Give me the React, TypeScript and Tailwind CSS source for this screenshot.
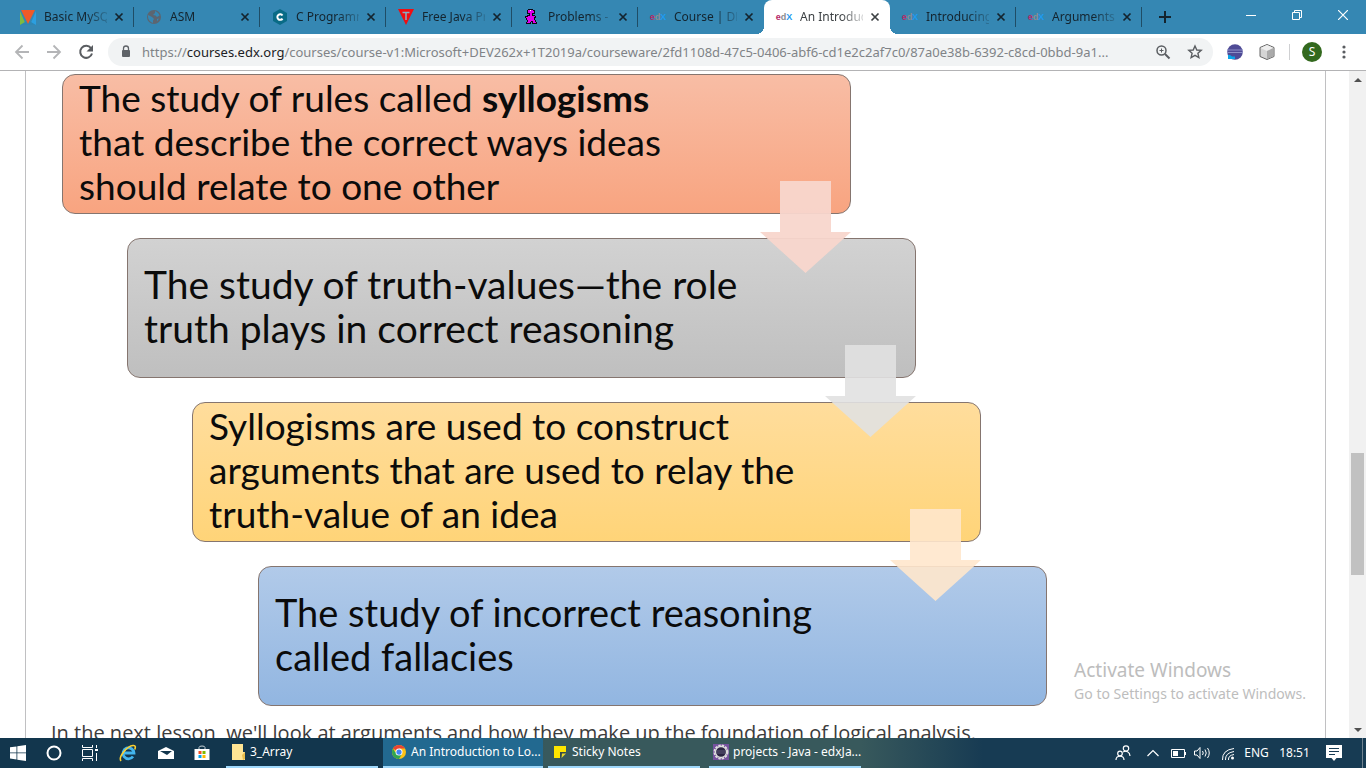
import React from "react";

type IconProps = { className?: string };

function EdxIcon() {
  return (
    <span aria-hidden="true" className="flex h-4 w-4 shrink-0 items-center justify-center font-['Liberation_Sans',sans-serif] text-[9px] leading-none font-bold">
      <span className="text-[#b52a67]">e</span>
      <span className="text-[#8a8c8f]">d</span>
      <span className="text-[#1d9bf0]">X</span>
    </span>
  );
}

function CourseIcon() {
  return (
    <svg viewBox="0 0 16 16" className="h-4 w-4 shrink-0">
      <path d="M0 2v14h6z" fill="#7dbb42" />
      <path d="M16 2v14h-6z" fill="#2c9fe0" />
      <path d="M0 16l5-3 3 1 3-1 5 3z" fill="#2e86b4" />
      <path d="M1 1h14L8 15z" fill="#f05a28" />
    </svg>
  );
}

function GlobeIcon() {
  return (
    <svg viewBox="0 0 16 16" className="h-4 w-4 shrink-0">
      <circle cx="8" cy="8" r="7" fill="#5c6570" />
      <path d="M9 2c2 1 4 2 4.500 4.500L11 8 9.500 6.500 7 6l2-2zM2 6l4 2 2 2-1 1.500V14C4 13 2 10.500 2 8zM11 10l2-.5-2 3z" fill="#3587b3" />
    </svg>
  );
}

function CIcon() {
  return (
    <svg viewBox="0 0 16 16" className="h-4 w-4 shrink-0">
      <path d="M8 0l7 4v8l-7 4-7-4V4z" fill="#096b86" />
      <path d="M10.500 6.500A2.800 2.800 0 1 0 10.500 9.600" fill="none" stroke="#fff" strokeWidth="2" />
    </svg>
  );
}

function TriangleIcon() {
  return (
    <svg viewBox="0 0 16 16" className="h-4 w-4 shrink-0">
      <path d="M0 0h16L8 16z" fill="#f10d10" />
      <path d="M4.500 3.500h7M8 3.500V11" stroke="#87aec4" strokeWidth="1.500" />
    </svg>
  );
}

function DinoIcon() {
  return (
    <svg viewBox="0 0 16 16" className="h-4 w-4 shrink-0" shapeRendering="crispEdges">
      <path d="M4 0h5v1h2v4H9v1h2v1h1v2h-1v2h1v2h1v2H8v-2H7v2H2v-2h1v-2H2V9H1V7h2V6h2V5H3V1h1z" fill="#0c0513" />
      <path d="M4 1h5v1h1v2H8v3h3v1h-1v3h1v2h1v1H9v-2H7v1H6v1H3v-1h1v-2H3V9H2V8h2V7h2V4H4z" fill="#e000ee" />
      <path d="M6 1h1v1H6z" fill="#fff" />
    </svg>
  );
}

function Close({ className = "" }: IconProps) {
  return (
    <svg viewBox="0 0 10 10" className={`h-[10px] w-[10px] ${className}`}>
      <path d="M1.500 1.500l7 7m0-7l-7 7" stroke="currentColor" strokeWidth="1.700" fill="none" />
    </svg>
  );
}

const tabs = [
  { title: "Basic MySQ", icon: <CourseIcon />, line: true },
  { title: "ASM", icon: <GlobeIcon />, line: true },
  { title: "C Programm", icon: <CIcon />, line: true },
  { title: "Free Java Pr", icon: <TriangleIcon />, line: true },
  { title: "Problems -", icon: <DinoIcon />, line: true },
  { title: "Course | DE", icon: <EdxIcon />, line: false },
  { title: "An Introduc", icon: <EdxIcon />, active: true, line: false },
  { title: "Introducing", icon: <EdxIcon />, line: true },
  { title: "Arguments", icon: <EdxIcon />, line: true },
];

function TabStrip() {
  return (
    <header className="flex h-[34px] shrink-0 bg-[#3587b3] pl-2">
      <div className="flex min-w-0">
        {tabs.map((tab) => (
          <div
            key={tab.title}
            className={
              tab.active
                ? "relative flex w-[126px] items-center rounded-t-lg bg-white pr-[7px] pl-3 text-[#3c4043]"
                : "relative flex w-[126px] items-center pr-[7px] pl-3 text-[#14242e]"
            }
          >
            {tab.active && (
              <>
                <span className="absolute bottom-0 -left-2 h-2 w-2 bg-[radial-gradient(circle_at_0_0,#3587b3_8px,#fff_8px)]" />
                <span className="absolute -right-2 bottom-0 h-2 w-2 bg-[radial-gradient(circle_at_100%_0,#3587b3_8px,#fff_8px)]" />
              </>
            )}
            <button className="flex min-w-0 flex-1 items-center gap-2">
              {tab.icon}
              <span className="flex-1 overflow-hidden text-left text-[12px] leading-4 whitespace-nowrap [mask-image:linear-gradient(to_right,#000_65%,#0003)]">
                {tab.title}
              </span>
            </button>
            <button aria-label={`Close ${tab.title}`} className="ml-1 flex h-4 w-4 items-center justify-center">
              <Close />
            </button>
            {tab.line && <span className="absolute top-[7px] right-0 h-5 w-px bg-[#1f4d66]" />}
          </div>
        ))}
      </div>
      <button aria-label="New tab" className="ml-[15px] flex w-4 items-center justify-center text-[#14242e]">
        <svg viewBox="0 0 12 12" className="h-3 w-3">
          <path d="M6 0v12M0 6h12" stroke="currentColor" strokeWidth="2" />
        </svg>
      </button>
      <div className="ml-auto flex h-[29px] text-white">
        <button aria-label="Minimize" className="flex w-[46px] items-center justify-center">
          <svg viewBox="0 0 10 10" className="h-[10px] w-[10px]"><path d="M0 5.500h10" stroke="currentColor" /></svg>
        </button>
        <button aria-label="Restore" className="flex w-[46px] items-center justify-center">
          <svg viewBox="0 0 10 10" className="h-[10px] w-[10px]" fill="none" stroke="currentColor"><path d="M.5 2.500h7v7h-7zM2.500 2.500v-2h7v7h-2" /></svg>
        </button>
        <button aria-label="Close window" className="flex w-[46px] items-center justify-center">
          <svg viewBox="0 0 10 10" className="h-[10px] w-[10px]"><path d="M0 0l10 10M10 0L0 10" stroke="currentColor" strokeWidth="1.200" /></svg>
        </button>
      </div>
    </header>
  );
}

function Toolbar() {
  return (
    <div className="flex h-[37px] shrink-0 items-center border-b border-[#b3b3b5] bg-white pr-[14px] pl-[14px]">
      <div className="flex w-[94px] shrink-0 gap-4">
        <button aria-label="Back" className="h-4 w-4 text-[#b4b5b7]">
          <svg viewBox="0 0 16 16" fill="none" stroke="currentColor" strokeWidth="1.800"><path d="M15 8H2M8.500 1.500L2 8l6.500 6.500" /></svg>
        </button>
        <button aria-label="Forward" className="h-4 w-4 text-[#b4b5b7]">
          <svg viewBox="0 0 16 16" fill="none" stroke="currentColor" strokeWidth="1.800"><path d="M1 8h13M7.500 1.500L14 8l-6.500 6.500" /></svg>
        </button>
        <button aria-label="Reload" className="h-4 w-4 text-[#5a5d61]">
          <svg viewBox="0 0 16 16" fill="none"><path d="M13 4.200A6 6 0 1 0 14 9.500" stroke="currentColor" strokeWidth="2" /><path d="M15 1v6.500H8.500z" fill="currentColor" /></svg>
        </button>
      </div>
      <div className="flex h-7 min-w-0 flex-1 items-center rounded-full bg-[#f1f3f4] pr-[10px] pl-3">
        <svg viewBox="0 0 12 14" className="mr-[10px] h-[14px] w-3 shrink-0 text-[#5f6368]">
          <path d="M3.500 6V3.500a2.500 2.500 0 0 1 5 0V6" fill="none" stroke="currentColor" strokeWidth="1.300" />
          <rect x="2" y="5" width="8" height="7" rx="1" fill="currentColor" />
        </svg>
        <div className="min-w-0 flex-1 truncate text-[13px] leading-5 text-[#808387]">
          https://<span className="text-[#202124]">courses.edx.org</span>/courses/course-v1:Microsoft+DEV262x+1T2019a/courseware/2fd1108d-47c5-0406-abf6-cd1e2c2af7c0/87a0e38b-6392-c8cd-0bbd-9a1...
        </div>
        <button aria-label="Zoom" className="ml-3 h-4 w-4 shrink-0 text-[#5a5d61]">
          <svg viewBox="0 0 16 16" fill="none" stroke="currentColor"><circle cx="6.500" cy="6.500" r="4.500" strokeWidth="1.500" /><path d="M10 10l4.500 4.500" strokeWidth="2" /><path d="M4.500 6.500h4M6.500 4.500v4" /></svg>
        </button>
        <button aria-label="Bookmark" className="ml-4 h-4 w-4 shrink-0 text-[#5a5d61]">
          <svg viewBox="0 0 16 16" fill="none" stroke="currentColor" strokeWidth="1.400"><path d="M8 2l1.800 4 4.400.4-3.300 2.900 1 4.300L8 11.300l-3.900 2.300 1-4.300-3.300-2.900 4.400-.4z" /></svg>
        </button>
      </div>
      <button aria-label="Eclipse extension" className="ml-[14px] h-4 w-4 shrink-0">
        <svg viewBox="0 0 16 16"><circle cx="8" cy="8" r="7.800" fill="#4f4b96" /><path d="M0 6h16M0 8.500h16" stroke="#8d8fc6" /><path d="M1 14v-3h2l2 1.500h3V15H1z" fill="#0ba4e8" /></svg>
      </button>
      <button aria-label="Cube extension" className="ml-4 h-4 w-4 shrink-0">
        <svg viewBox="0 0 16 16" stroke="#646464" strokeWidth="1"><path d="M8 .5l7 3v9l-7 3-7-3v-9z" fill="#d5d5d5" /><path d="M8 1l6.500 3L8 7 1.500 4z" fill="#eee" stroke="none" /><path d="M8 7l6.500-3v8.500L8 15z" fill="#aaa" stroke="none" /></svg>
      </button>
      <span className="ml-[14px] h-4 w-px bg-[#cfd0d2]" />
      <button aria-label="Profile" className="ml-3 flex h-5 w-5 shrink-0 items-center justify-center rounded-full bg-[#33691e] text-[12px] text-white">S</button>
      <button aria-label="Menu" className="ml-[14px] h-4 w-4 shrink-0 text-[#5a5d61]">
        <svg viewBox="0 0 16 16" fill="currentColor"><circle cx="8" cy="3" r="1.600" /><circle cx="8" cy="8" r="1.600" /><circle cx="8" cy="13" r="1.600" /></svg>
      </button>
    </div>
  );
}

function Arrow({ className }: IconProps) {
  return (
    <svg viewBox="0 0 92 92" className={`absolute top-[106px] left-[697px] z-10 h-[92px] w-[92px] ${className}`}>
      <path d="M20 0h51v51h20L45.500 92 0 51h20z" fill="currentColor" />
    </svg>
  );
}

const steps = [
  {
    text: <>The study of rules called <strong>syllogisms</strong><br />that describe the correct ways ideas<br />should relate to one other</>,
    box: "text-[37px] from-[#f8bda5] to-[#f8a480]",
    arrow: "text-[#f8d6cc]/95",
  },
  {
    text: <>The study of truth-values—the role<br />truth plays in correct reasoning</>,
    box: "ml-[65px] text-[39px] from-[#d2d2d2] to-[#bfbfbf]",
    arrow: "text-[#e1e1e1]/90",
  },
  {
    text: <>Syllogisms are used to construct<br />arguments that are used to relay the<br />truth-value of an idea</>,
    box: "ml-[130px] text-[37px] from-[#ffdd9c] to-[#ffd478]",
    arrow: "text-[#ffe7cc]/90",
  },
  {
    text: <>The study of incorrect reasoning<br />called fallacies</>,
    box: "ml-[196px] text-[38px] from-[#b1cae9] to-[#92b6e1]",
    arrow: null,
  },
];

function Page() {
  return (
    <div className="relative flex min-h-0 flex-1 bg-white">
      <main className="mr-[23px] ml-[25px] min-w-0 flex-1 overflow-hidden border-x border-[#c0c0c2] pt-[3px] pl-9">
        <div className="flex flex-col items-start gap-6 font-[Lato,sans-serif]">
          {steps.map((step, i) => (
            <section
              key={i}
              className={`relative flex h-[140px] w-[789px] items-center rounded-[13px] border border-[#85756f] bg-linear-to-b pb-1 pl-4 leading-[44px] text-[#0b0b0b] ${step.box}`}
            >
              <p className="whitespace-nowrap">{step.text}</p>
              {step.arrow && <Arrow className={step.arrow} />}
            </section>
          ))}
        </div>
        <p className="mt-3 -ml-[11px] font-['Open_Sans',sans-serif] text-[20px] leading-[30px] whitespace-nowrap text-[#3c3c3c]">
          In the next lesson, we'll look at arguments and how they make up the foundation of logical analysis.
        </p>
      </main>
      <div className="flex w-[17px] shrink-0 flex-col items-center bg-[#f1f1f1] text-[#505050]">
        <button aria-label="Scroll up" className="flex h-[17px] w-full items-center justify-center">
          <svg viewBox="0 0 8 4" className="h-1 w-2"><path d="M4 0l4 4H0z" fill="currentColor" /></svg>
        </button>
        <div className="flex w-full flex-1 flex-col items-center">
          <div className="grow-[366]" />
          <div className="w-[13px] grow-[122] bg-[#c1c1c1]" />
          <div className="grow-[146]" />
        </div>
        <button aria-label="Scroll down" className="flex h-[17px] w-full items-center justify-center">
          <svg viewBox="0 0 8 4" className="h-1 w-2"><path d="M0 0h8L4 4z" fill="currentColor" /></svg>
        </button>
      </div>
      <div className="absolute right-[60px] bottom-[34px] text-[#bdbdbd]">
        <p className="text-[19px] leading-7">Activate Windows</p>
        <p className="text-[14px] leading-5">Go to Settings to activate Windows.</p>
      </div>
    </div>
  );
}

function ChromeIcon() {
  return (
    <svg viewBox="0 0 16 16" className="h-[14px] w-[14px] shrink-0">
      <circle cx="8" cy="8" r="8" fill="#fbc116" />
      <path d="M8 8L1.100 4A8 8 0 0 1 14.900 4H8z" fill="#e94335" />
      <path d="M1.100 4A8 8 0 0 0 8 16l3.500-6L8 8H3.500z" fill="#30a652" />
      <circle cx="8" cy="8" r="4" fill="#fff" />
      <circle cx="8" cy="8" r="3" fill="#4285f4" />
    </svg>
  );
}

function FolderIcon() {
  return (
    <svg viewBox="0 0 14 16" className="h-4 w-[14px] shrink-0"><path d="M0 0h11v8h2v8H0z" fill="#ffe594" /><path d="M10 11l3-3v7l-2 1z" fill="#e9bd4c" /></svg>
  );
}

function NoteIcon() {
  return (
    <svg viewBox="0 0 12 12" className="h-3 w-3 shrink-0"><path d="M0 0h12v6H6v6H0z" fill="#ffe600" /><path d="M6 6h6l-6 6z" fill="#344b4a" /><path d="M8 7.500h4L7.500 12z" fill="#e8d92a" /></svg>
  );
}

function EclipseIcon() {
  return (
    <svg viewBox="0 0 16 16" className="h-4 w-4 shrink-0"><rect width="16" height="16" fill="#75529d" /><circle cx="8" cy="8" r="6.500" fill="none" stroke="#ddd" strokeWidth="2" strokeDasharray="2.400 1" /><circle cx="8" cy="8" r="5.500" fill="#2b2542" stroke="#dedede" strokeWidth="1.300" /><path d="M3.500 7h9M3.500 9h9" stroke="#605a78" /></svg>
  );
}

const trayButton = "flex h-full items-center justify-center";

function Taskbar() {
  return (
    <footer className="flex h-[30px] shrink-0 items-center bg-[linear-gradient(to_right,#12364d_28%,#38595c_40%,#38595c_63%,#173b53_72%)] text-[12px] text-white">
      <button aria-label="Start" className={`${trayButton} w-9`}>
        <svg viewBox="0 0 16 16" className="h-4 w-4" fill="#fff"><path d="M0 2.300l6.500-.9v6.100H0zM7.300 1.300L16 0v7.500H7.300zM0 8.300h6.500v6.200L0 13.600zM7.300 8.300H16V16l-8.700-1.300z" /></svg>
      </button>
      <button aria-label="Cortana" className={`${trayButton} w-9`}>
        <svg viewBox="0 0 16 16" className="h-4 w-4"><circle cx="8" cy="8" r="6.500" fill="none" stroke="#fff" strokeWidth="2" /></svg>
      </button>
      <button aria-label="Task view" className={`${trayButton} w-9`}>
        <svg viewBox="0 0 16 16" className="h-4 w-4" fill="none" stroke="#fff"><path d="M.5 0v2.500h10V0M.5 16v-2.500h10V16M.5 4.500h10v7H.5zM14.500 0v3M14.500 8v8" /><path d="M13 5h3" strokeWidth="2" /></svg>
      </button>
      <button aria-label="Internet Explorer" className={`${trayButton} w-10`}>
        <svg viewBox="0 0 18 18" className="h-[18px] w-[18px]" fill="none"><path d="M14 12.500A5.500 5.500 0 1 1 15 9H5" stroke="#42b5ee" strokeWidth="2.800" /><path d="M2 17C-1 13 8 2 14 1.500c3-.3 2.500 2 1.800 4" stroke="#fbd031" strokeWidth="1.600" /></svg>
      </button>
      <button aria-label="Mail" className={`${trayButton} w-9`}>
        <svg viewBox="0 0 16 14" className="h-[14px] w-4"><path d="M0 5l8-4 8 4v8H0z" fill="#fff" /><path d="M2 5h12L9 9z" fill="#12364d" /></svg>
      </button>
      <button aria-label="Store" className={`${trayButton} mr-[6px] w-9`}>
        <svg viewBox="0 0 16 16" className="h-4 w-4"><path d="M5 4V2.500Q5 1 8 1t3 1.500V4" stroke="#c9d3d8" fill="none" /><path d="M.5 4h15v11h-15z" fill="#fff" /><path d="M4.500 6h3v3h-3z" fill="#f25022" /><path d="M8.500 6h3v3h-3z" fill="#7fba00" /><path d="M4.500 10h3v3h-3z" fill="#00a4ef" /><path d="M8.500 10h3v3h-3z" fill="#ffb900" /></svg>
      </button>
      <button className="mr-[5px] flex h-full w-[152px] items-center gap-1 border-b-2 border-[#9fd8fb] pl-[6px]"><FolderIcon />3_Array</button>
      <button className="mr-[5px] flex h-full w-[160px] items-center gap-[5px] border-b-2 border-[#9fd8fb] bg-[#226990] pl-[9px] whitespace-nowrap"><ChromeIcon />An Introduction to Lo...</button>
      <button className="mr-[9px] flex h-full w-[152px] items-center gap-[6px] border-b-2 border-[#9fd8fb] pl-[6px]"><NoteIcon />Sticky Notes</button>
      <button className="flex h-full w-[152px] items-center gap-1 border-b-2 border-[#9fd8fb] pl-1 whitespace-nowrap"><EclipseIcon />projects - Java - edxJa...</button>
      <div className="ml-auto flex h-full items-center">
        <button aria-label="People" className={`${trayButton} w-8`}>
          <svg viewBox="0 0 16 16" className="h-4 w-4" fill="none" stroke="#fff" strokeWidth="1.200"><circle cx="11" cy="3.500" r="2.700" /><circle cx="5" cy="8.500" r="2.300" /><path d="M1 15c0-5 8-5 8 0M8 7c3-1.800 7 0 7 4" /></svg>
        </button>
        <button aria-label="Show hidden icons" className={`${trayButton} w-7`}>
          <svg viewBox="0 0 12 8" className="h-2 w-3" fill="none" stroke="#fff" strokeWidth="1.200"><path d="M.5 7L6 1.500 11.500 7" /></svg>
        </button>
        <button aria-label="Battery" className={`${trayButton} w-6`}>
          <svg viewBox="0 0 16 10" className="h-[10px] w-4"><path d="M.5 1.500h13v8H.5zM14.500 4v3" fill="none" stroke="#fff" /><path d="M2 3h5v5H2z" fill="#fff" /></svg>
        </button>
        <button aria-label="Volume" className={`${trayButton} w-6`}>
          <svg viewBox="0 0 18 14" className="h-[14px] w-[18px]" fill="none" stroke="#fff"><path d="M.5 5h2.500l3-3.500v11L3 9H.5zM8.500 5q1.500 2 0 4M11 3.500q2.500 3.500 0 7M13.500 2q3.500 5 0 10" /></svg>
        </button>
        <button aria-label="Network" className={`${trayButton} w-[26px]`}>
          <svg viewBox="0 0 14 14" className="h-[14px] w-[14px]" fill="none" stroke="#fff"><path d="M1.500 14Q1 4 13 2.500M4.500 14Q4 7 13 5.500M7.500 14Q7 9.500 13 8.500" /><circle cx="11.500" cy="12" r="1.500" fill="#fff" stroke="none" /></svg>
        </button>
        <button className={`${trayButton} w-[31px]`}>ENG</button>
        <button className={`${trayButton} w-[45px]`}>18:51</button>
        <button aria-label="Notifications" className={`${trayButton} w-[34px]`}>
          <svg viewBox="0 0 16 16" className="h-4 w-4"><path d="M0 0h16v13h-5.500L8 16l-2.500-3H0z" fill="#fff" /><path d="M3 3.500h10M3 6.500h10M3 9.500h6" stroke="#173b53" /></svg>
        </button>
        <span className="ml-[11px] h-full w-1 border-l border-[#70828f]" />
      </div>
    </footer>
  );
}

export default function App() {
  return (
    <div className="flex h-screen flex-col overflow-hidden bg-white font-['Noto_Sans','Open_Sans',sans-serif]">
      <TabStrip />
      <Toolbar />
      <Page />
      <Taskbar />
    </div>
  );
}
